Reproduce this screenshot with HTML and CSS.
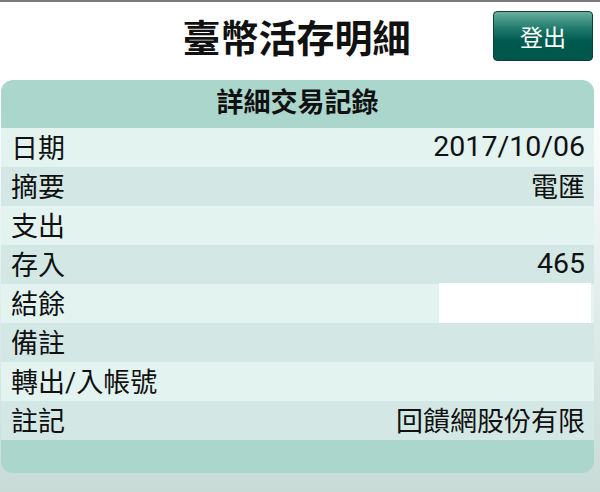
FILE: index.html
```html
<!DOCTYPE html>
<html lang="zh-Hant">
<head>
  <meta charset="UTF-8" />
  <meta name="viewport" content="width=device-width, initial-scale=1.0" />
  <title>臺幣活存明細</title>
  <link rel="stylesheet" href="styles.css">
</head>
<body>
  <header class="topbar">
    <span></span>
    <h1>臺幣活存明細</h1>
    <button class="logout">登出</button>
  </header>

  <div class="panel">
    <h2>詳細交易記錄</h2>
    <div class="row odd"><span>日期</span><span class="num">2017/10/06</span></div>
    <div class="row even"><span>摘要</span><span>電匯</span></div>
    <div class="row odd"><span>支出</span><span></span></div>
    <div class="row even"><span>存入</span><span class="num">465</span></div>
    <div class="row odd"><span>結餘</span><span class="blank"></span></div>
    <div class="row even"><span>備註</span><span></span></div>
    <div class="row odd"><span>轉出/入帳號</span><span></span></div>
    <div class="row even"><span>註記</span><span>回饋網股份有限</span></div>
    <div class="panel-foot"></div>
  </div>
</body>
</html>
```

FILE: styles.css
```css
body {
  margin: 0;
  font-family: Roboto, "Noto Sans CJK TC", sans-serif;
  color: #111;
  min-height: 492px;
  background: linear-gradient(#ffffff 0%, #ffffff 20%, #c8dbd7 100%);
  border-top: 2px solid #7a7a7a;
  box-sizing: border-box;
}
.topbar {
  display: grid;
  grid-template-columns: 1fr auto 1fr;
  height: 78px;
  padding-right: 7px;
}
.topbar h1 {
  margin: 0;
  font-size: 38px;
  font-weight: bold;
  line-height: 74px;
}
.logout {
  justify-self: end;
  margin-top: 9px;
  width: 100px;
  height: 50px;
  border: 1px solid #0b3f38;
  border-radius: 4px;
  background: linear-gradient(#6aae9f 0%, #1f7a6c 35%, #005a4f 60%, #00554a 100%);
  color: #fff;
  font-family: "Noto Sans CJK TC", sans-serif;
  font-size: 23px;
  padding: 0;
}
.panel {
  margin: 0 6px 0 1px;
  border-radius: 12px;
  overflow: hidden;
}
.panel h2 {
  margin: 0;
  height: 48px;
  line-height: 46px;
  text-align: center;
  font-size: 27px;
  font-weight: bold;
  background: #abd6cb;
}
.row {
  display: flex;
  justify-content: space-between;
  align-items: center;
  box-sizing: border-box;
  height: 39px;
  padding: 0 9px 3px 10px;
  font-size: 27px;
}
.num {
  font-size: 28.5px;
}
.odd {
  background: #e2f3f0;
}
.even {
  background: #d3e8e4;
}
.blank {
  align-self: stretch;
  width: 152px;
  margin: -1px -6px -3px 0;
  background: #fff;
}
.panel-foot {
  height: 33px;
  background: #abd6cb;
}
```
